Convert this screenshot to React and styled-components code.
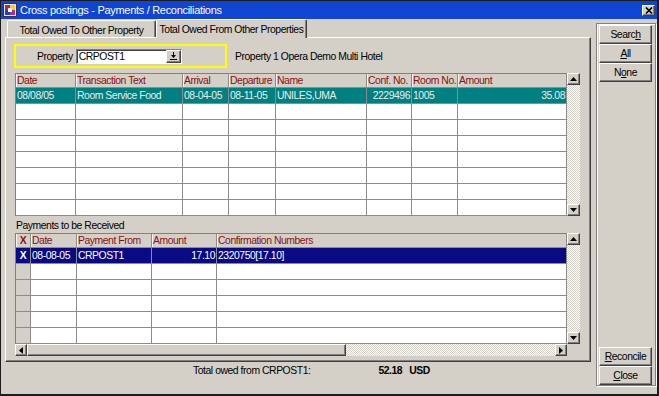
import styled, { createGlobalStyle } from "styled-components";

const FACE = "#d4d0c8";
const FONT = `"Liberation Sans", Arial, sans-serif`;

const GlobalStyle = createGlobalStyle`
  html, body {
    margin: 0;
    padding: 0;
    background: ${FACE};
  }
  body {
    font-family: ${FONT};
    font-size: 10.4px;
    letter-spacing: -0.45px;
    color: #000;
  }
  * {
    box-sizing: border-box;
  }
`;

const topColumns = [
  { label: "Date", width: 60 },
  { label: "Transaction Text", width: 107 },
  { label: "Arrival", width: 46 },
  { label: "Departure", width: 47 },
  { label: "Name", width: 91 },
  { label: "Conf. No.", width: 45, align: "right" },
  { label: "Room No.", width: 46 },
  { label: "Amount", width: 109, align: "right" },
];

const topRows = [
  ["08/08/05", "Room Service Food", "08-04-05", "08-11-05", "UNILES,UMA", "2229496", "1005", "35.08"],
];

const bottomColumns = [
  { label: "X", width: 15, align: "center", face: true },
  { label: "Date", width: 46 },
  { label: "Payment From", width: 75 },
  { label: "Amount", width: 65, align: "right" },
  { label: "Confirmation Numbers", width: 350 },
];

const bottomRows = [["X", "08-08-05", "CRPOST1", "17.10", "2320750[17.10]"]];

const cols = (list) => list.map((c) => `${c.width}px`).join(" ");

export default function App() {
  const topFill = Array.from({ length: 8 }, (_, i) => topRows[i] || null);
  const bottomFill = Array.from({ length: 6 }, (_, i) => bottomRows[i] || null);

  return (
    <>
      <GlobalStyle />
      <Window>
        <TitleBar>
          <AppIcon />
          <TitleText>Cross postings - Payments / Reconciliations</TitleText>
          <CloseButton>
            <svg width="8" height="7" viewBox="0 0 8 7">
              <path d="M1 0.5L7 6.5M7 0.5L1 6.5" stroke="#000" strokeWidth="1.6" />
            </svg>
          </CloseButton>
        </TitleBar>

        <Main>
          <LeftArea>
            <TabStrip>
              <Tab $width={149}>Total Owed To Other Property</Tab>
              <Tab $width={151} $active>
                Total Owed From Other Properties
              </Tab>
            </TabStrip>

            <TabPanel>
              <PropertyRow>
                <PropertyBox>
                  <FieldLabel>Property</FieldLabel>
                  <ComboInput>
                    <span>CRPOST1</span>
                    <LovButton>
                      <svg width="7" height="8" viewBox="0 0 7 8">
                        <path d="M3 0h1v3h2L3.5 6 1 3h2z" fill="#000" />
                        <rect x="0" y="7" width="7" height="1" fill="#000" />
                      </svg>
                    </LovButton>
                  </ComboInput>
                </PropertyBox>
                <PropertyName>Property 1 Opera Demo Multi Hotel</PropertyName>
              </PropertyRow>

              <GridFrame $top={5}>
                <GridMain>
                  <GridBody>
                    <HeaderRow $cols={cols(topColumns)}>
                      {topColumns.map((c) => (
                        <HeaderCell key={c.label}>{c.label}</HeaderCell>
                      ))}
                    </HeaderRow>
                    {topFill.map((row, i) => (
                      <GridRow
                        key={i}
                        $cols={cols(topColumns)}
                        $bg={row ? "#008080" : "#fff"}
                        $fg={row ? "#ececec" : "#000"}
                      >
                        {topColumns.map((c, j) => (
                          <Cell key={c.label} $align={c.align}>
                            {row ? row[j] : ""}
                          </Cell>
                        ))}
                      </GridRow>
                    ))}
                  </GridBody>
                  <VScroll>
                    <ScrollButton>
                      <Arrow dir="up" />
                    </ScrollButton>
                    <ScrollTrack />
                    <ScrollButton>
                      <Arrow dir="down" />
                    </ScrollButton>
                  </VScroll>
                </GridMain>
              </GridFrame>

              <SectionLabel>Payments to be Received</SectionLabel>

              <GridFrame>
                <GridMain>
                  <GridBody>
                    <HeaderRow $cols={cols(bottomColumns)}>
                      {bottomColumns.map((c) => (
                        <HeaderCell
                          key={c.label}
                          $align={c.align === "center" ? "center" : "left"}
                          $strong={c.label === "X"}
                        >
                          {c.label}
                        </HeaderCell>
                      ))}
                    </HeaderRow>
                    {bottomFill.map((row, i) => (
                      <GridRow
                        key={i}
                        $cols={cols(bottomColumns)}
                        $bg={row ? "#0a0a84" : "#fff"}
                        $fg={row ? "#fff" : "#000"}
                      >
                        {bottomColumns.map((c, j) => (
                          <Cell
                            key={c.label}
                            $align={c.align}
                            $face={c.face && !row}
                            $strong={c.face}
                          >
                            {row ? row[j] : ""}
                          </Cell>
                        ))}
                      </GridRow>
                    ))}
                  </GridBody>
                  <VScroll>
                    <ScrollButton>
                      <Arrow dir="up" />
                    </ScrollButton>
                    <ScrollTrack />
                    <ScrollButton>
                      <Arrow dir="down" />
                    </ScrollButton>
                  </VScroll>
                </GridMain>
                <HScrollRow>
                  <HScroll>
                    <ScrollButton $wide>
                      <Arrow dir="left" />
                    </ScrollButton>
                    <Thumb />
                    <ScrollTrack />
                    <ScrollButton $wide>
                      <Arrow dir="right" />
                    </ScrollButton>
                  </HScroll>
                </HScrollRow>
              </GridFrame>
            </TabPanel>

            <TotalLine>
              <span>Total owed from CRPOST1:</span>
              <TotalValue>52.18</TotalValue>
              <TotalCurrency>USD</TotalCurrency>
            </TotalLine>
          </LeftArea>

          <ButtonGroup>
            <ButtonStack>
              <WinButton>
                Searc<Mnemonic>h</Mnemonic>
              </WinButton>
              <WinButton>
                <Mnemonic>A</Mnemonic>ll
              </WinButton>
              <WinButton>
                N<Mnemonic>o</Mnemonic>ne
              </WinButton>
            </ButtonStack>
            <ButtonStack>
              <WinButton>
                <Mnemonic>R</Mnemonic>econcile
              </WinButton>
              <WinButton>
                <Mnemonic>C</Mnemonic>lose
              </WinButton>
            </ButtonStack>
          </ButtonGroup>
        </Main>
      </Window>
    </>
  );
}

function AppIcon() {
  return (
    <svg width="14" height="14" viewBox="0 0 14 14">
      <rect x="0.5" y="0.5" width="13" height="13" fill="#e8e4f0" stroke="#303060" />
      <rect x="2" y="2" width="5" height="5" fill="#d02020" />
      <rect x="7" y="2" width="5" height="5" fill="#f0d020" />
      <rect x="2" y="7" width="5" height="5" fill="#2040c0" />
      <rect x="7" y="7" width="5" height="5" fill="#a030a0" />
      <rect x="5" y="5" width="4" height="4" fill="#ffffff" />
    </svg>
  );
}

function Arrow({ dir }) {
  const shapes = {
    up: { w: 7, h: 4, d: "M0 4L3.5 0L7 4z" },
    down: { w: 7, h: 4, d: "M0 0L7 0L3.5 4z" },
    left: { w: 4, h: 7, d: "M4 0L4 7L0 3.5z" },
    right: { w: 4, h: 7, d: "M0 0L4 3.5L0 7z" },
  };
  const s = shapes[dir];
  return (
    <svg width={s.w} height={s.h} viewBox={`0 0 ${s.w} ${s.h}`}>
      <path d={s.d} fill="#000" />
    </svg>
  );
}

const raised = `
  border-style: solid;
  border-width: 1px;
  border-color: #fff #404040 #404040 #fff;
  box-shadow: inset -1px -1px #808080;
  background: ${FACE};
`;

const Window = styled.div`
  width: 659px;
  height: 396px;
  display: flex;
  flex-direction: column;
  background: ${FACE};
  border-style: solid;
  border-color: #1c1c1c;
  border-width: 1px 2px 2px 1px;
  overflow: hidden;
`;

const TitleBar = styled.div`
  height: 18px;
  flex: none;
  display: flex;
  align-items: center;
  gap: 3px;
  padding: 0 2px 0 2px;
  background: #1044d2;
  color: #fff;
`;

const TitleText = styled.span`
  flex: 1;
  font-size: 11px;
  letter-spacing: -0.3px;
  white-space: nowrap;
`;

const CloseButton = styled.div`
  ${raised}
  width: 13px;
  height: 11px;
  display: flex;
  align-items: center;
  justify-content: center;
`;

const Main = styled.div`
  flex: 1;
  display: flex;
`;

const LeftArea = styled.div`
  width: 590px;
  display: flex;
  flex-direction: column;
  padding-left: 4px;
`;

const TabStrip = styled.div`
  height: 18px;
  display: flex;
  align-items: flex-end;
  padding-left: 2px;
  position: relative;
  z-index: 2;
`;

const Tab = styled.div`
  width: ${(p) => p.$width}px;
  height: ${(p) => (p.$active ? 19 : 17)}px;
  margin-bottom: ${(p) => (p.$active ? -1 : 0)}px;
  padding-top: ${(p) => (p.$active ? 0 : 2)}px;
  display: flex;
  align-items: center;
  justify-content: center;
  white-space: nowrap;
  background: ${FACE};
  border-style: solid;
  border-width: 1px 1px 0 1px;
  border-color: #fff #404040 transparent #fff;
  border-radius: 2px 2px 0 0;
  box-shadow: inset -1px 0 #808080;
`;

const TabPanel = styled.div`
  width: 586px;
  height: 325px;
  display: flex;
  flex-direction: column;
  padding: 6px 9px 0 9px;
  border-style: solid;
  border-width: 1px;
  border-color: #fff #404040 #404040 #fff;
  box-shadow: inset -1px -1px #808080;
`;

const PropertyRow = styled.div`
  height: 24px;
  flex: none;
  display: flex;
  align-items: center;
  gap: 8px;
  margin-left: -1px;
`;

const PropertyBox = styled.div`
  width: 213px;
  height: 24px;
  display: flex;
  align-items: center;
  gap: 3px;
  padding-left: 21px;
  border: 2px solid #ffff00;
`;

const FieldLabel = styled.span`
  white-space: nowrap;
`;

const ComboInput = styled.div`
  width: 106px;
  height: 15px;
  display: flex;
  align-items: center;
  justify-content: space-between;
  padding-left: 2px;
  background: #fff;
  border-style: solid;
  border-width: 1px;
  border-color: #808080 #fff #fff #808080;
  box-shadow: inset 1px 1px #404040;
  line-height: 13px;
`;

const LovButton = styled.div`
  ${raised}
  width: 15px;
  height: 13px;
  display: flex;
  align-items: center;
  justify-content: center;
`;

const PropertyName = styled.span`
  white-space: nowrap;
`;

const GridFrame = styled.div`
  width: 565px;
  flex: none;
  margin-top: ${(p) => p.$top || 0}px;
  display: flex;
  flex-direction: column;
`;

const GridMain = styled.div`
  display: flex;
`;

const GridBody = styled.div`
  width: 552px;
  display: flex;
  flex-direction: column;
  border-left: 1px solid #808080;
  border-top: 1px solid #808080;
`;

const HeaderRow = styled.div`
  display: grid;
  grid-template-columns: ${(p) => p.$cols};
  height: 14px;
`;

const HeaderCell = styled.div`
  background: ${FACE};
  color: #8a1010;
  font-weight: ${(p) => (p.$strong ? 700 : 400)};
  text-align: ${(p) => p.$align || "left"};
  padding: 0 1px 0 1px;
  line-height: 13px;
  white-space: nowrap;
  overflow: hidden;
  border-right: 1px solid #8c8c8c;
  border-bottom: 1px solid #8c8c8c;
  box-shadow: inset 1px 0 #f4f4f4;
`;

const GridRow = styled.div`
  display: grid;
  grid-template-columns: ${(p) => p.$cols};
  height: 16px;
  background: ${(p) => p.$bg};
  color: ${(p) => p.$fg};
`;

const Cell = styled.div`
  text-align: ${(p) => p.$align || "left"};
  font-weight: ${(p) => (p.$strong ? 700 : 400)};
  background: ${(p) => (p.$face ? FACE : "transparent")};
  padding: 0 1px 0 1px;
  line-height: 15px;
  white-space: nowrap;
  overflow: hidden;
  border-right: 1px solid #8c8c8c;
  border-bottom: 1px solid #8c8c8c;
`;

const VScroll = styled.div`
  width: 13px;
  display: flex;
  flex-direction: column;
`;

const ScrollButton = styled.div`
  ${raised}
  flex: none;
  width: ${(p) => (p.$wide ? 12 : 13)}px;
  height: 12px;
  display: flex;
  align-items: center;
  justify-content: center;
`;

const ScrollTrack = styled.div`
  flex: 1;
  background: repeating-conic-gradient(#ffffff 0 25%, ${FACE} 0 50%) 0 0 / 2px 2px;
`;

const HScrollRow = styled.div`
  display: flex;
  height: 12px;
`;

const HScroll = styled.div`
  width: 552px;
  display: flex;
`;

const Thumb = styled.div`
  ${raised}
  width: 319px;
  flex: none;
`;

const SectionLabel = styled.div`
  height: 17px;
  flex: none;
  line-height: 19px;
  padding-left: 1px;
  white-space: nowrap;
`;

const TotalLine = styled.div`
  height: 32px;
  display: flex;
  align-items: flex-start;
  padding: 2px 0 0 188px;
  line-height: 14px;
  white-space: nowrap;
`;

const TotalValue = styled.span`
  margin-left: 68px;
  font-weight: 700;
`;

const TotalCurrency = styled.span`
  margin-left: 7px;
  font-weight: 700;
`;

const ButtonGroup = styled.div`
  width: 60px;
  height: 363px;
  margin: 4px 0 0 5px;
  display: flex;
  flex-direction: column;
  justify-content: space-between;
  padding: 1px 3px 0 2px;
  border: 1px solid #808080;
  box-shadow: inset 1px 1px #fff, 1px 1px #fff;
`;

const ButtonStack = styled.div`
  display: flex;
  flex-direction: column;
`;

const WinButton = styled.div`
  ${raised}
  width: 53px;
  height: 19px;
  display: flex;
  align-items: center;
  justify-content: center;
  white-space: nowrap;
`;

const Mnemonic = styled.span`
  text-decoration: underline;
`;
